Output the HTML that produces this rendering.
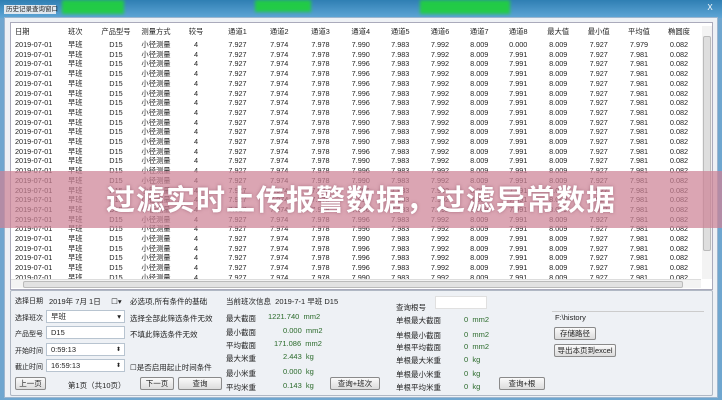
<!DOCTYPE html>
<html><head><meta charset="utf-8"><style>
*{margin:0;padding:0;box-sizing:border-box}
body{width:722px;height:400px;overflow:hidden;background:#6fa6cf;font-family:"Liberation Sans","Noto Sans CJK SC",sans-serif;font-size:7.5px;color:#222;position:relative}
.a{position:absolute;white-space:nowrap}
#title{left:0;top:0;width:722px;height:18px;background:linear-gradient(#2f7fb3,#5fa6d6)}
.g{position:absolute;background:#1fd23a;filter:blur(1.5px);opacity:.9}
#body{left:4px;top:17px;width:714px;height:381px;background:#eef1f5;border:1px solid #9db6cf}
#tbl{left:10px;top:22px;width:703px;height:268px;background:#fff;border:1px solid #aab}
.r{position:absolute;left:0;height:9.7px;line-height:9.7px;display:grid;grid-template-columns:44px 40.5px 41px 39px 41px 42px 41.5px 41px 39.5px 39.5px 40px 38.5px 39.5px 40.5px 40.5px 40px 40px;font-size:7.3px}
.r span{text-align:center;overflow:hidden}
.r span:first-child{text-align:left;padding-left:4px}
#hs{left:11px;top:279px;width:690px;height:9px;background:#f3f3f3;border-top:1px solid #ddd}
#vs{left:702px;top:26px;width:10px;height:253px;background:#f3f3f3}
.box{position:absolute;background:#fff;border:1px solid #b8c4d0;height:13px;padding-left:4px;line-height:12px}
.btn{position:absolute;background:linear-gradient(#fafafa,#dcdcdc);border:1px solid #8a8a8a;border-radius:2px;height:13px;text-align:center;line-height:12px}
#band{left:0;top:171px;width:722px;height:57px;background:rgba(205,130,150,.72)}
#bt{left:0;top:177px;width:722px;text-align:center;font-size:29px;font-weight:bold;color:#fff;letter-spacing:1px;text-shadow:0 0 3px rgba(120,60,80,.5)}
.gr{color:#2a6a2a}
.lb{font-size:7px}
</style></head><body>
<div id="title" class="a"></div>
<div class="g" style="left:62px;top:0;width:62px;height:14px"></div>
<div class="g" style="left:255px;top:0;width:56px;height:12px"></div>
<div class="g" style="left:420px;top:0;width:90px;height:14px"></div>
<div class="a" style="left:4px;top:5px;width:52px;height:9px;background:#dfe8f0;font-size:6.5px;line-height:9px;padding-left:2px">历史记录查询窗口</div>
<div class="a" style="left:702px;top:3px;width:16px;height:11px;color:#fff;font-size:8px;text-align:center">X</div>
<div id="body" class="a"></div>
<div id="tbl" class="a">
<div class="r" style="top:4px"><span>日期</span><span>班次</span><span>产品型号</span><span>测量方式</span><span>较号</span><span>通道1</span><span>通道2</span><span>通道3</span><span>通道4</span><span>通道5</span><span>通道6</span><span>通道7</span><span>通道8</span><span>最大值</span><span>最小值</span><span>平均值</span><span>椭圆度</span></div>
<div class="r" style="top:17px"><span>2019-07-01</span><span>早班</span><span>D15</span><span>小径测量</span><span>4</span><span>7.927</span><span>7.974</span><span>7.978</span><span>7.990</span><span>7.983</span><span>7.992</span><span>8.009</span><span>0.000</span><span>8.009</span><span>7.927</span><span>7.979</span><span>0.082</span></div>
<div class="r" style="top:26.7px"><span>2019-07-01</span><span>早班</span><span>D15</span><span>小径测量</span><span>4</span><span>7.927</span><span>7.974</span><span>7.978</span><span>7.990</span><span>7.983</span><span>7.992</span><span>8.009</span><span>7.991</span><span>8.009</span><span>7.927</span><span>7.981</span><span>0.082</span></div>
<div class="r" style="top:36.4px"><span>2019-07-01</span><span>早班</span><span>D15</span><span>小径测量</span><span>4</span><span>7.927</span><span>7.974</span><span>7.978</span><span>7.996</span><span>7.983</span><span>7.992</span><span>8.009</span><span>7.991</span><span>8.009</span><span>7.927</span><span>7.981</span><span>0.082</span></div>
<div class="r" style="top:46.1px"><span>2019-07-01</span><span>早班</span><span>D15</span><span>小径测量</span><span>4</span><span>7.927</span><span>7.974</span><span>7.978</span><span>7.996</span><span>7.983</span><span>7.992</span><span>8.009</span><span>7.991</span><span>8.009</span><span>7.927</span><span>7.981</span><span>0.082</span></div>
<div class="r" style="top:55.8px"><span>2019-07-01</span><span>早班</span><span>D15</span><span>小径测量</span><span>4</span><span>7.927</span><span>7.974</span><span>7.978</span><span>7.996</span><span>7.983</span><span>7.992</span><span>8.009</span><span>7.991</span><span>8.009</span><span>7.927</span><span>7.981</span><span>0.082</span></div>
<div class="r" style="top:65.5px"><span>2019-07-01</span><span>早班</span><span>D15</span><span>小径测量</span><span>4</span><span>7.927</span><span>7.974</span><span>7.978</span><span>7.996</span><span>7.983</span><span>7.992</span><span>8.009</span><span>7.991</span><span>8.009</span><span>7.927</span><span>7.981</span><span>0.082</span></div>
<div class="r" style="top:75.2px"><span>2019-07-01</span><span>早班</span><span>D15</span><span>小径测量</span><span>4</span><span>7.927</span><span>7.974</span><span>7.978</span><span>7.996</span><span>7.983</span><span>7.992</span><span>8.009</span><span>7.991</span><span>8.009</span><span>7.927</span><span>7.981</span><span>0.082</span></div>
<div class="r" style="top:84.9px"><span>2019-07-01</span><span>早班</span><span>D15</span><span>小径测量</span><span>4</span><span>7.927</span><span>7.974</span><span>7.978</span><span>7.996</span><span>7.983</span><span>7.992</span><span>8.009</span><span>7.991</span><span>8.009</span><span>7.927</span><span>7.981</span><span>0.082</span></div>
<div class="r" style="top:94.6px"><span>2019-07-01</span><span>早班</span><span>D15</span><span>小径测量</span><span>4</span><span>7.927</span><span>7.974</span><span>7.978</span><span>7.990</span><span>7.983</span><span>7.992</span><span>8.009</span><span>7.991</span><span>8.009</span><span>7.927</span><span>7.981</span><span>0.082</span></div>
<div class="r" style="top:104.3px"><span>2019-07-01</span><span>早班</span><span>D15</span><span>小径测量</span><span>4</span><span>7.927</span><span>7.974</span><span>7.978</span><span>7.996</span><span>7.983</span><span>7.992</span><span>8.009</span><span>7.991</span><span>8.009</span><span>7.927</span><span>7.981</span><span>0.082</span></div>
<div class="r" style="top:114px"><span>2019-07-01</span><span>早班</span><span>D15</span><span>小径测量</span><span>4</span><span>7.927</span><span>7.974</span><span>7.978</span><span>7.990</span><span>7.983</span><span>7.992</span><span>8.009</span><span>7.991</span><span>8.009</span><span>7.927</span><span>7.981</span><span>0.082</span></div>
<div class="r" style="top:123.7px"><span>2019-07-01</span><span>早班</span><span>D15</span><span>小径测量</span><span>4</span><span>7.927</span><span>7.974</span><span>7.978</span><span>7.996</span><span>7.983</span><span>7.992</span><span>8.009</span><span>7.991</span><span>8.009</span><span>7.927</span><span>7.981</span><span>0.082</span></div>
<div class="r" style="top:133.4px"><span>2019-07-01</span><span>早班</span><span>D15</span><span>小径测量</span><span>4</span><span>7.927</span><span>7.974</span><span>7.978</span><span>7.990</span><span>7.983</span><span>7.992</span><span>8.009</span><span>7.991</span><span>8.009</span><span>7.927</span><span>7.981</span><span>0.082</span></div>
<div class="r" style="top:143.1px"><span>2019-07-01</span><span>早班</span><span>D15</span><span>小径测量</span><span>4</span><span>7.927</span><span>7.974</span><span>7.978</span><span>7.996</span><span>7.983</span><span>7.992</span><span>8.009</span><span>7.991</span><span>8.009</span><span>7.927</span><span>7.981</span><span>0.082</span></div>
<div class="r" style="top:152.8px"><span>2019-07-01</span><span>早班</span><span>D15</span><span>小径测量</span><span>4</span><span>7.927</span><span>7.974</span><span>7.978</span><span>7.990</span><span>7.983</span><span>7.992</span><span>8.009</span><span>7.991</span><span>8.009</span><span>7.927</span><span>7.981</span><span>0.082</span></div>
<div class="r" style="top:162.5px"><span>2019-07-01</span><span>早班</span><span>D15</span><span>小径测量</span><span>4</span><span>7.927</span><span>7.974</span><span>7.978</span><span>7.996</span><span>7.983</span><span>7.992</span><span>8.009</span><span>7.991</span><span>8.009</span><span>7.927</span><span>7.981</span><span>0.082</span></div>
<div class="r" style="top:172.2px"><span>2019-07-01</span><span>早班</span><span>D15</span><span>小径测量</span><span>4</span><span>7.927</span><span>7.974</span><span>7.978</span><span>7.990</span><span>7.983</span><span>7.992</span><span>8.009</span><span>7.991</span><span>8.009</span><span>7.927</span><span>7.981</span><span>0.082</span></div>
<div class="r" style="top:181.9px"><span>2019-07-01</span><span>早班</span><span>D15</span><span>小径测量</span><span>4</span><span>7.927</span><span>7.974</span><span>7.978</span><span>7.996</span><span>7.983</span><span>7.992</span><span>8.009</span><span>7.991</span><span>8.009</span><span>7.927</span><span>7.981</span><span>0.082</span></div>
<div class="r" style="top:191.6px"><span>2019-07-01</span><span>早班</span><span>D15</span><span>小径测量</span><span>4</span><span>7.927</span><span>7.974</span><span>7.978</span><span>7.996</span><span>7.983</span><span>7.992</span><span>8.009</span><span>7.991</span><span>8.009</span><span>7.927</span><span>7.981</span><span>0.082</span></div>
<div class="r" style="top:201.3px"><span>2019-07-01</span><span>早班</span><span>D15</span><span>小径测量</span><span>4</span><span>7.927</span><span>7.974</span><span>7.978</span><span>7.996</span><span>7.983</span><span>7.992</span><span>8.009</span><span>7.991</span><span>8.009</span><span>7.927</span><span>7.981</span><span>0.082</span></div>
<div class="r" style="top:211px"><span>2019-07-01</span><span>早班</span><span>D15</span><span>小径测量</span><span>4</span><span>7.927</span><span>7.974</span><span>7.978</span><span>7.990</span><span>7.983</span><span>7.992</span><span>8.009</span><span>7.991</span><span>8.009</span><span>7.927</span><span>7.981</span><span>0.082</span></div>
<div class="r" style="top:220.7px"><span>2019-07-01</span><span>早班</span><span>D15</span><span>小径测量</span><span>4</span><span>7.927</span><span>7.974</span><span>7.978</span><span>7.996</span><span>7.983</span><span>7.992</span><span>8.009</span><span>7.991</span><span>8.009</span><span>7.927</span><span>7.981</span><span>0.082</span></div>
<div class="r" style="top:230.4px"><span>2019-07-01</span><span>早班</span><span>D15</span><span>小径测量</span><span>4</span><span>7.927</span><span>7.974</span><span>7.978</span><span>7.996</span><span>7.983</span><span>7.992</span><span>8.009</span><span>7.991</span><span>8.009</span><span>7.927</span><span>7.981</span><span>0.082</span></div>
<div class="r" style="top:240.1px"><span>2019-07-01</span><span>早班</span><span>D15</span><span>小径测量</span><span>4</span><span>7.927</span><span>7.974</span><span>7.978</span><span>7.996</span><span>7.983</span><span>7.992</span><span>8.009</span><span>7.991</span><span>8.009</span><span>7.927</span><span>7.981</span><span>0.082</span></div>
<div class="r" style="top:249.8px"><span>2019-07-01</span><span>早班</span><span>D15</span><span>小径测量</span><span>4</span><span>7.927</span><span>7.974</span><span>7.978</span><span>7.990</span><span>7.983</span><span>7.992</span><span>8.009</span><span>7.991</span><span>8.009</span><span>7.927</span><span>7.981</span><span>0.082</span></div>
</div>
<div id="vs" class="a"><div style="position:absolute;left:1px;top:10px;width:8px;height:215px;background:#dedede;border:1px solid #bbb;border-radius:2px"></div></div>
<div id="hs" class="a"><div style="position:absolute;left:12px;top:1px;width:660px;height:7px;background:#e2e2e2;border:1px solid #bbb;border-radius:2px"></div></div>
<div class="a" style="left:10px;top:290px;width:703px;height:106px;border:1px solid #b0b8c4;border-radius:2px"></div>

<div class="a lb" style="left:15px;top:296px">选择日期</div>
<div class="a" style="left:49px;top:296px">2019年 7月 1日 &nbsp;&nbsp;&nbsp;&nbsp;☐▾</div>
<div class="a" style="left:130px;top:296px">必选项,所有条件的基础</div>
<div class="a lb" style="left:15px;top:313px">选择班次</div>
<div class="box" style="left:46px;top:310px;width:79px">早班<span style="position:absolute;right:3px">▾</span></div>
<div class="a" style="left:130px;top:313px">选择全部此筛选条件无效</div>
<div class="a lb" style="left:15px;top:329px">产品型号</div>
<div class="box" style="left:46px;top:326px;width:79px">D15</div>
<div class="a" style="left:130px;top:329px">不填此筛选条件无效</div>
<div class="a lb" style="left:15px;top:346px">开始时间</div>
<div class="box" style="left:46px;top:343px;width:79px">0:59:13<span style="position:absolute;right:3px;font-size:6px">⬍</span></div>
<div class="a lb" style="left:15px;top:362px">截止时间</div>
<div class="box" style="left:46px;top:359px;width:79px">16:59:13<span style="position:absolute;right:3px;font-size:6px">⬍</span></div>
<div class="a" style="left:130px;top:362px">☐是否启用起止时间条件</div>
<div class="btn" style="left:15px;top:377px;width:31px">上一页</div>
<div class="a" style="left:68px;top:380px">第1页（共10页）</div>
<div class="btn" style="left:140px;top:377px;width:34px">下一页</div>
<div class="btn" style="left:178px;top:377px;width:44px">查询</div>

<div class="a" style="left:226px;top:296px">当前班次信息 &nbsp;2019-7-1 早班 D15</div>
<div class="a" style="left:226px;top:313px">最大截面</div><div class="a gr" style="left:268px;top:312px">1221.740 &nbsp;mm2</div>
<div class="a" style="left:226px;top:327px">最小截面</div><div class="a gr" style="left:283px;top:326px">0.000 &nbsp;mm2</div>
<div class="a" style="left:226px;top:340px">平均截面</div><div class="a gr" style="left:274px;top:339px">171.086 &nbsp;mm2</div>
<div class="a" style="left:226px;top:353px">最大米重</div><div class="a gr" style="left:283px;top:352px">2.443 &nbsp;kg</div>
<div class="a" style="left:226px;top:368px">最小米重</div><div class="a gr" style="left:283px;top:367px">0.000 &nbsp;kg</div>
<div class="a" style="left:226px;top:382px">平均米重</div><div class="a gr" style="left:283px;top:381px">0.143 &nbsp;kg</div>
<div class="btn" style="left:330px;top:377px;width:50px">查询+班次</div>

<div class="a" style="left:396px;top:302px">查询根号</div>
<div class="box" style="left:435px;top:296px;width:52px;border-color:#e0e0e0"></div>
<div class="a" style="left:396px;top:315px">单根最大截面</div><div class="a gr" style="left:464px;top:315px">0 &nbsp;mm2</div>
<div class="a" style="left:396px;top:330px">单根最小截面</div><div class="a gr" style="left:464px;top:330px">0 &nbsp;mm2</div>
<div class="a" style="left:396px;top:342px">单根平均截面</div><div class="a gr" style="left:464px;top:342px">0 &nbsp;mm2</div>
<div class="a" style="left:396px;top:355px">单根最大米重</div><div class="a gr" style="left:464px;top:355px">0 &nbsp;kg</div>
<div class="a" style="left:396px;top:369px">单根最小米重</div><div class="a gr" style="left:464px;top:369px">0 &nbsp;kg</div>
<div class="a" style="left:396px;top:382px">单根平均米重</div><div class="a gr" style="left:464px;top:382px">0 &nbsp;kg</div>
<div class="btn" style="left:499px;top:377px;width:46px">查询+根</div>

<div class="a" style="left:552px;top:311px;width:152px;height:12px;border-top:1px solid #ccc;padding-left:3px;line-height:12px">F:\history</div>
<div class="btn" style="left:554px;top:327px;width:42px">存储路径</div>
<div class="btn" style="left:554px;top:344px;width:62px">导出本页到excel</div>

<div id="band" class="a"></div>
<div id="bt" class="a">过滤实时上传报警数据，过滤异常数据</div>
</body></html>
